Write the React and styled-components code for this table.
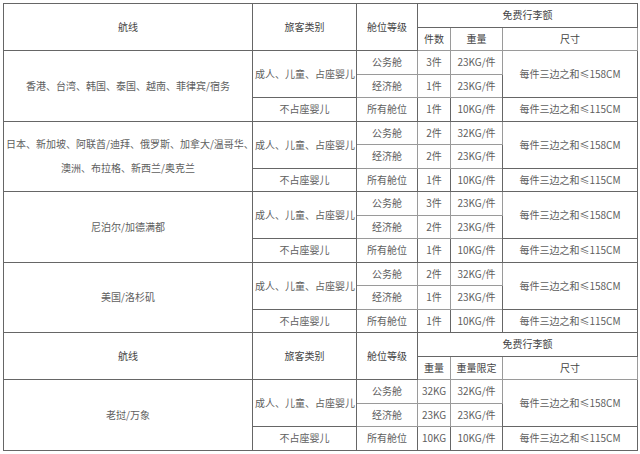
import React from 'react';
import styled, { createGlobalStyle } from 'styled-components';

const GlobalStyle = createGlobalStyle`
  html, body {
    margin: 0;
    padding: 0;
    background: #fff;
  }
  body {
    font-family: "Noto Sans CJK SC", "Noto Sans", sans-serif;
  }
`;

const Page = styled.div`
  padding: 3px;
  width: 640px;
  height: 454px;
  box-sizing: border-box;
  overflow: hidden;
`;

const Table = styled.table`
  width: 634px;
  table-layout: fixed;
  border-collapse: collapse;
  border: 1px solid #555;
  font-size: 10px;
  color: #5e5e5e;
`;

const Row = styled.tr`
  height: 23.5px;
`;

const Cell = styled.td`
  border: 1px solid ${(p) => (p.$light ? '#9a9a9a' : '#666')};
  padding: 0 2px;
  text-align: center;
  vertical-align: middle;
  line-height: ${(p) => (p.$tall ? '24px' : '14px')};
  white-space: nowrap;
  font-weight: normal;
  color: ${(p) => (p.$head ? '#444' : '#5e5e5e')};
`;

const groups = [
  {
    route: ['香港、台湾、韩国、泰国、越南、菲律宾/宿务'],
    rows: [
      ['3件', '23KG/件'],
      ['1件', '23KG/件'],
      ['1件', '10KG/件'],
    ],
  },
  {
    route: ['日本、新加坡、阿联酋/迪拜、俄罗斯、加拿大/温哥华、', '澳洲、布拉格、新西兰/奥克兰'],
    rows: [
      ['2件', '32KG/件'],
      ['2件', '23KG/件'],
      ['1件', '10KG/件'],
    ],
  },
  {
    route: ['尼泊尔/加德满都'],
    rows: [
      ['3件', '23KG/件'],
      ['2件', '23KG/件'],
      ['1件', '10KG/件'],
    ],
  },
  {
    route: ['美国/洛杉矶'],
    rows: [
      ['2件', '32KG/件'],
      ['1件', '23KG/件'],
      ['1件', '10KG/件'],
    ],
  },
];

const laos = {
  route: ['老挝/万象'],
  rows: [
    ['32KG', '32KG/件'],
    ['23KG', '23KG/件'],
    ['10KG', '10KG/件'],
  ],
};

function Header({ first, second }) {
  return (
    <>
      <Row>
        <Cell as="th" $head rowSpan={2}>航线</Cell>
        <Cell as="th" $head rowSpan={2}>旅客类别</Cell>
        <Cell as="th" $head rowSpan={2}>舱位等级</Cell>
        <Cell as="th" $head colSpan={3}>免费行李额</Cell>
      </Row>
      <Row>
        <Cell as="th" $head $light>{first}</Cell>
        <Cell as="th" $head $light>{second}</Cell>
        <Cell as="th" $head $light>尺寸</Cell>
      </Row>
    </>
  );
}

function Group({ group }) {
  const [a, b, c] = group.rows;
  const tall = group.route.length > 1;
  return (
    <>
      <Row>
        <Cell rowSpan={3} $tall={tall}>
          {group.route.map((line, i) => (
            <React.Fragment key={i}>
              {i > 0 && <br />}
              {line}
            </React.Fragment>
          ))}
        </Cell>
        <Cell rowSpan={2}>成人、儿童、占座婴儿</Cell>
        <Cell $light>公务舱</Cell>
        <Cell $light>{a[0]}</Cell>
        <Cell $light>{a[1]}</Cell>
        <Cell rowSpan={2}>每件三边之和≤158CM</Cell>
      </Row>
      <Row>
        <Cell $light>经济舱</Cell>
        <Cell $light>{b[0]}</Cell>
        <Cell $light>{b[1]}</Cell>
      </Row>
      <Row>
        <Cell>不占座婴儿</Cell>
        <Cell>所有舱位</Cell>
        <Cell>{c[0]}</Cell>
        <Cell>{c[1]}</Cell>
        <Cell>每件三边之和≤115CM</Cell>
      </Row>
    </>
  );
}

export default function App() {
  return (
    <Page>
      <GlobalStyle />
      <Table>
        <colgroup>
          <col style={{ width: 249 }} />
          <col style={{ width: 104 }} />
          <col style={{ width: 61 }} />
          <col style={{ width: 33 }} />
          <col style={{ width: 52 }} />
          <col style={{ width: 135 }} />
        </colgroup>
        <tbody>
          <Header first="件数" second="重量" />
          {groups.map((g, i) => (
            <Group key={i} group={g} />
          ))}
          <Header first="重量" second="重量限定" />
          <Group group={laos} />
        </tbody>
      </Table>
    </Page>
  );
}
